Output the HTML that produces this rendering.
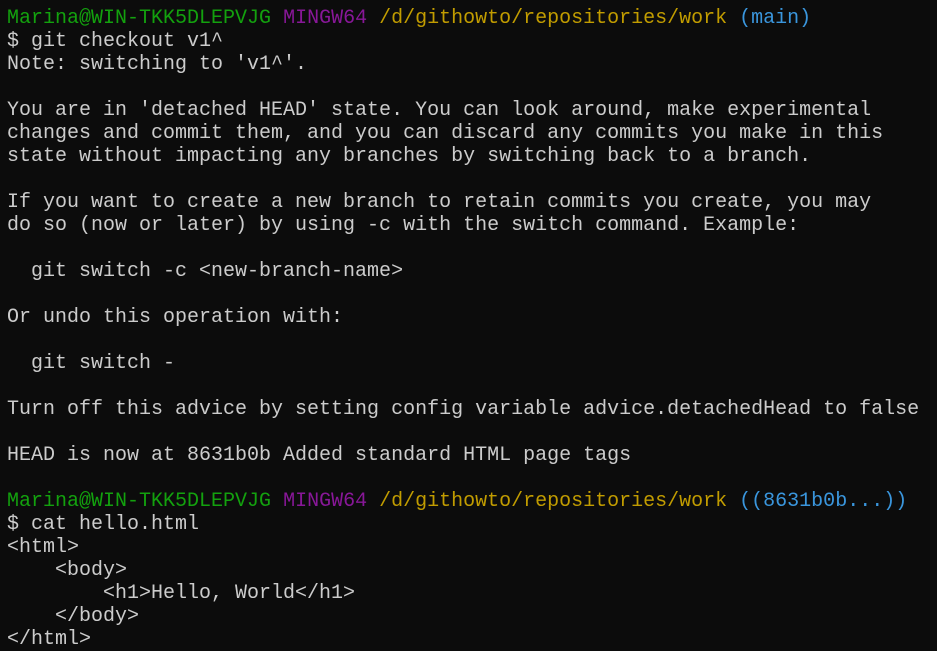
<html><head><style>
body{margin:0;background:#0c0c0c;width:937px;height:650px;overflow:hidden}
pre{margin:0;padding:7px 0 0 7px;font-family:"Liberation Mono",monospace;font-size:20px;line-height:23px;color:#cccccc}
.g{color:#13a10e}.p{color:#881798}.y{color:#c19c00}.b{color:#3a96dd}
</style></head><body><pre><span class="g">Marina@WIN-TKK5DLEPVJG</span> <span class="p">MINGW64</span> <span class="y">/d/githowto/repositories/work</span> <span class="b">(main)</span>
$ git checkout v1^
Note: switching to 'v1^'.

You are in 'detached HEAD' state. You can look around, make experimental
changes and commit them, and you can discard any commits you make in this
state without impacting any branches by switching back to a branch.

If you want to create a new branch to retain commits you create, you may
do so (now or later) by using -c with the switch command. Example:

  git switch -c &lt;new-branch-name&gt;

Or undo this operation with:

  git switch -

Turn off this advice by setting config variable advice.detachedHead to false

HEAD is now at 8631b0b Added standard HTML page tags

<span class="g">Marina@WIN-TKK5DLEPVJG</span> <span class="p">MINGW64</span> <span class="y">/d/githowto/repositories/work</span> <span class="b">((8631b0b...))</span>
$ cat hello.html
&lt;html&gt;
    &lt;body&gt;
        &lt;h1&gt;Hello, World&lt;/h1&gt;
    &lt;/body&gt;
&lt;/html&gt;</pre></body></html>
